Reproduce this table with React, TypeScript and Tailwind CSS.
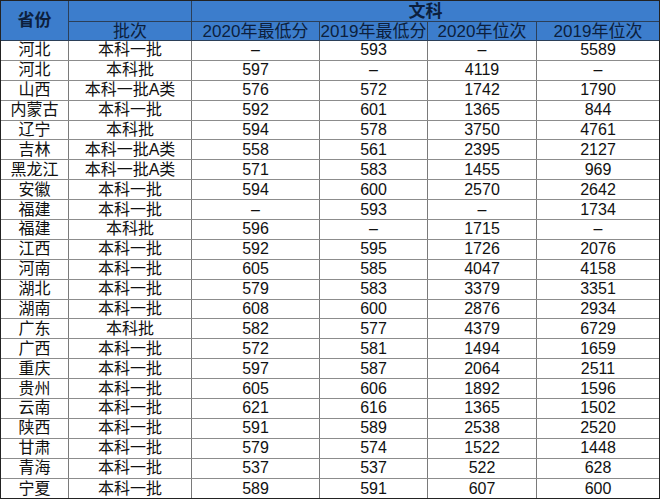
const rows: string[][] = [
  ['河北', '本科一批', '–', '593', '–', '5589'],
  ['河北', '本科批', '597', '–', '4119', '–'],
  ['山西', '本科一批A类', '576', '572', '1742', '1790'],
  ['内蒙古', '本科一批', '592', '601', '1365', '844'],
  ['辽宁', '本科批', '594', '578', '3750', '4761'],
  ['吉林', '本科一批A类', '558', '561', '2395', '2127'],
  ['黑龙江', '本科一批A类', '571', '583', '1455', '969'],
  ['安徽', '本科一批', '594', '600', '2570', '2642'],
  ['福建', '本科一批', '–', '593', '–', '1734'],
  ['福建', '本科批', '596', '–', '1715', '–'],
  ['江西', '本科一批', '592', '595', '1726', '2076'],
  ['河南', '本科一批', '605', '585', '4047', '4158'],
  ['湖北', '本科一批', '579', '583', '3379', '3351'],
  ['湖南', '本科一批', '608', '600', '2876', '2934'],
  ['广东', '本科批', '582', '577', '4379', '6729'],
  ['广西', '本科一批', '572', '581', '1494', '1659'],
  ['重庆', '本科一批', '597', '587', '2064', '2511'],
  ['贵州', '本科一批', '605', '606', '1892', '1596'],
  ['云南', '本科一批', '621', '616', '1365', '1502'],
  ['陕西', '本科一批', '591', '589', '2538', '2520'],
  ['甘肃', '本科一批', '579', '574', '1522', '1448'],
  ['青海', '本科一批', '537', '537', '522', '628'],
  ['宁夏', '本科一批', '589', '591', '607', '600'],
];

const cols = 'grid grid-cols-[68px_123px_128px_108px_109px_122px]';

export default function App() {
  return (
    <div
      className="w-[662px] h-[500px] bg-white text-[16px] leading-none text-[#111]"
      style={{ fontFamily: '"Liberation Sans", "Noto Sans CJK SC", sans-serif' }}
    >
      <div className="w-[660px] border border-[#222]">
        {/* Header */}
        <div className="flex h-[40px] bg-[#3c7dcc] text-[#0c1f3d] text-[17px] border-b border-[#2b3f58]">
          <div className="w-[68px] flex items-center justify-center border-r border-[#2b3f58] font-semibold">
            省份
          </div>
          <div className="flex-1 flex flex-col">
            <div className="flex h-[21px] border-b border-[#2b3f58]">
              <div className="w-[123px] border-r border-[#2b3f58]" />
              <div className="flex-1 flex items-center justify-center font-semibold">文科</div>
            </div>
            <div className="flex flex-1">
              <div className="w-[123px] flex items-center justify-center border-r border-[#2b3f58]">批次</div>
              <div className="w-[128px] flex items-center justify-center border-r border-[#2b3f58]">2020年最低分</div>
              <div className="w-[108px] flex items-center justify-center border-r border-[#2b3f58]">2019年最低分</div>
              <div className="w-[109px] flex items-center justify-center border-r border-[#2b3f58]">2020年位次</div>
              <div className="w-[122px] flex items-center justify-center">2019年位次</div>
            </div>
          </div>
        </div>

        {/* Body */}
        {rows.map((r, i) => (
          <div
            key={i}
            className={`${cols} h-[19.9px] ${i < rows.length - 1 ? 'border-b border-[#8c8c8c]' : ''}`}
          >
            {r.map((c, j) => (
              <div
                key={j}
                className={`flex items-center justify-center ${j < 5 ? 'border-r border-[#7a7a7a]' : ''}`}
              >
                {c}
              </div>
            ))}
          </div>
        ))}
      </div>
    </div>
  );
}
